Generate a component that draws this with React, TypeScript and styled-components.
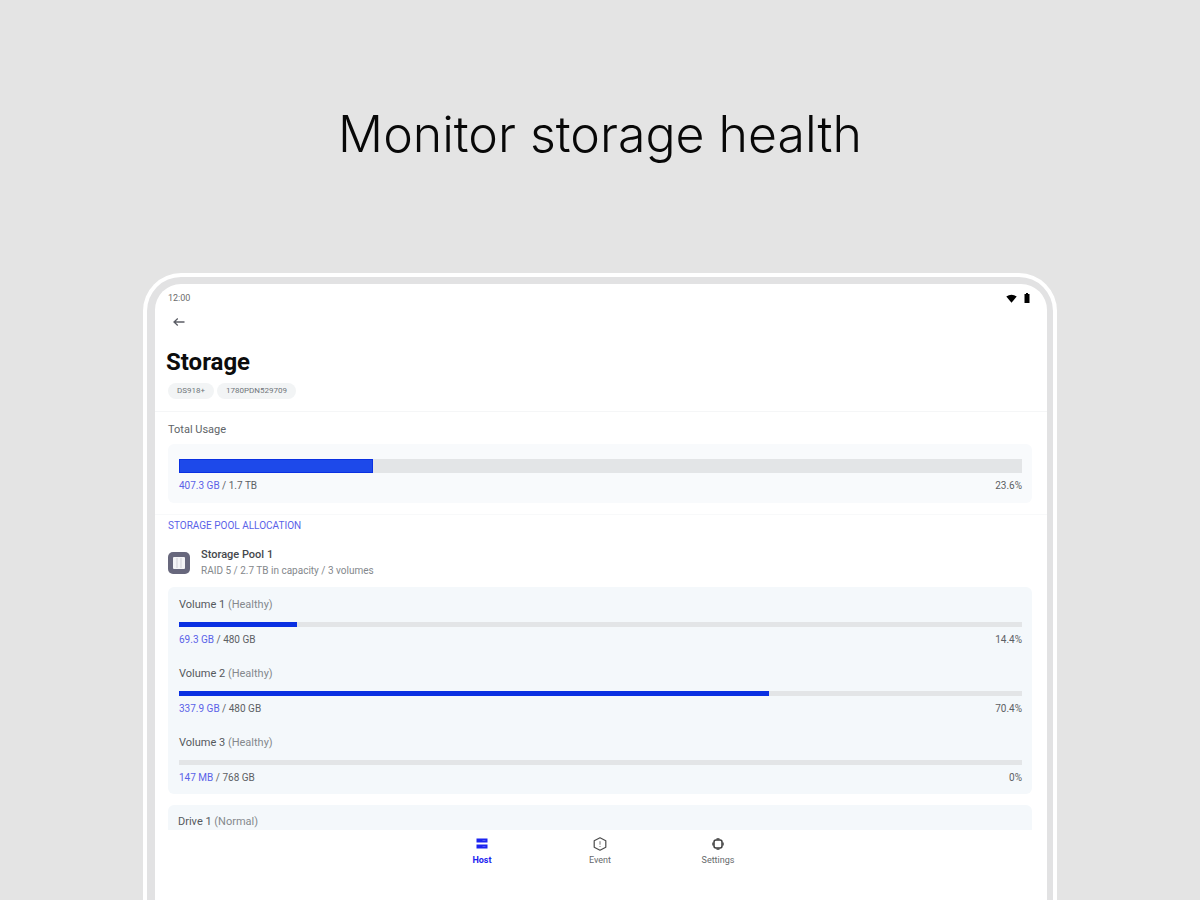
import React from "react";
import styled, { createGlobalStyle } from "styled-components";

const GlobalStyle = createGlobalStyle`
  * { box-sizing: border-box; }
  body { margin: 0; background: #e4e4e4; font-family: Roboto, "Liberation Sans", sans-serif; }
  h1, h2, h3, p { margin: 0; font-weight: 400; }
`;

const Stage = styled.main`
  min-height: 100vh;
  padding: 0 143px;
  display: flex;
  flex-direction: column;
`;

const Headline = styled.p`
  padding: 104px 0 109px;
  text-align: center;
  font-family: Inter, sans-serif;
  font-weight: 300;
  font-size: 50px;
  line-height: 60px;
  color: #080808;
`;

const Bezel = styled.div`
  flex: 1;
  display: flex;
  padding: 4px 4px 0;
  border-radius: 38px 38px 0 0;
  background: #fff;
`;

const Frame = styled.div`
  flex: 1;
  display: flex;
  padding: 7px 6px 0 8px;
  border-radius: 34px 34px 0 0;
  background: #e2e2e3;
`;

const Screen = styled.div`
  flex: 1;
  display: flex;
  flex-direction: column;
  border-radius: 26px 26px 0 0;
  background: #fff;
  overflow: hidden;
`;

const StatusBar = styled.div`
  display: flex;
  align-items: center;
  justify-content: space-between;
  padding: 8px 17px 0 13px;
  font-size: 9px;
  line-height: 12px;
  color: #6c6c6c;
`;

const StatusIcons = styled.div`
  display: flex;
  align-items: center;
  gap: 7px;
`;

const Header = styled.header`
  padding: 11px 11px 12px;
  border-bottom: 1px solid #f5f6f7;
`;

const BackButton = styled.button`
  display: flex;
  padding: 2px 6px;
  border: 0;
  background: none;
`;

const Title = styled.h1`
  padding: 19px 0 1px;
  font-size: 24px;
  line-height: 28px;
  font-weight: 700;
  color: #0c0c0c;
`;

const Tags = styled.div`
  display: flex;
  gap: 3px;
  padding: 6px 2px 0;
`;

const Tag = styled.span`
  padding: 0 9px;
  border-radius: 8px;
  background: #f2f4f5;
  font-size: 8px;
  line-height: 16px;
  color: #70757a;
`;

const Section = styled.section<{ $ruled?: boolean }>`
  padding: 11px 15px 0 13px;
  border-bottom: ${(p) => (p.$ruled ? "1px solid #f8f9fa" : "0")};
  padding-bottom: ${(p) => (p.$ruled ? "11px" : "0")};
`;

const SectionTitle = styled.h2`
  font-size: 11px;
  line-height: 14px;
  color: #606468;
`;

const Card = styled.div`
  margin-top: 7px;
  padding: 15px 10px 10px 11px;
  border-radius: 6px;
  background: #f8fafc;
`;

const PoolTitle = styled.h2`
  margin-top: -7px;
  font-size: 10px;
  line-height: 14px;
  color: #5a62e8;
`;

const PoolRow = styled.div`
  display: flex;
  align-items: center;
  gap: 11px;
  padding: 14px 0 8px;
`;

const PoolName = styled.h3`
  font-size: 11px;
  line-height: 16px;
  font-weight: 500;
  color: #45484c;
`;

const PoolInfo = styled.p`
  font-size: 10px;
  line-height: 16px;
  color: #84888c;
`;

const VolumeCard = styled.div`
  display: grid;
  gap: 20px;
  padding: 11px 10px 9px 11px;
  border-radius: 6px;
  background: #f4f8fb;
`;

const DriveCard = styled.div`
  margin-top: 11px;
  padding: 10px 10px 1px;
  border-radius: 6px 6px 0 0;
  background: #f4f8fb;
`;

const ItemName = styled.h3`
  font-size: 11px;
  line-height: 14px;
  color: #55595d;
`;

const Health = styled.span`
  color: #85898d;
`;

const Track = styled.div<{ $large?: boolean }>`
  height: ${(p) => (p.$large ? "14px" : "5px")};
  margin-top: ${(p) => (p.$large ? "0" : "10px")};
  background: #e3e5e7;
`;

const Fill = styled.div<{ $large?: boolean }>`
  height: 100%;
  background: ${(p) => (p.$large ? "#1d49ea" : "#0a30e2")};
  border: 1px solid #0a30e2;
`;

const Figures = styled.div`
  display: flex;
  justify-content: space-between;
  padding-top: 6px;
  font-size: 10px;
  line-height: 14px;
  color: #5c6064;
`;

const Used = styled.span`
  color: #5a62e8;
`;

const TabBar = styled.nav`
  display: flex;
  justify-content: center;
  padding: 7px 2px 32px 0;
`;

const Tab = styled.a<{ $active?: boolean }>`
  width: 118px;
  display: flex;
  flex-direction: column;
  align-items: center;
  gap: 3px;
  font-size: 9px;
  line-height: 12px;
  font-weight: ${(p) => (p.$active ? 700 : 400)};
  color: ${(p) => (p.$active ? "#1c24f0" : "#66696c")};
  text-decoration: none;
`;

type UsageProps = { used: string; total: string; label: string; share: number; large?: boolean };

function Usage({ used, total, label, share, large }: UsageProps) {
  return (
    <>
      <Track $large={large}>{share > 0 && <Fill $large={large} style={{ width: `${share}%` }} />}</Track>
      <Figures>
        <span>
          <Used>{used}</Used> / {total}
        </span>
        <span>{label}</span>
      </Figures>
    </>
  );
}

const volumes = [
  { name: "Volume 1", used: "69.3 GB", total: "480 GB", label: "14.4%", share: 14 },
  { name: "Volume 2", used: "337.9 GB", total: "480 GB", label: "70.4%", share: 70 },
  { name: "Volume 3", used: "147 MB", total: "768 GB", label: "0%", share: 0 },
];

const HostIcon = () => (
  <svg width="14" height="14" viewBox="0 0 14 14" aria-hidden="true">
    <path d="M1.500 1.500h11v4h-11zM1.500 7.500h11v4h-11z" fill="#1c24f0" />
    <path d="M7.500 3.500h3M7.500 9.500h3" stroke="#4d55f6" strokeWidth="1" />
  </svg>
);

const EventIcon = () => (
  <svg width="14" height="14" viewBox="0 0 14 14" fill="none" stroke="#4c4c4c" aria-hidden="true">
    <path d="M7 0.800l5.800 3v6.400L7 13.200l-5.800-3V3.800z" strokeWidth="1.200" strokeLinejoin="round" />
    <path d="M7 4.200v3.500M7 9v1" strokeWidth="1" stroke="#777" />
  </svg>
);

const SettingsIcon = () => (
  <svg width="14" height="14" viewBox="0 0 14 14" fill="none" stroke="#3c3c3c" aria-hidden="true">
    <rect x="3" y="3" width="8" height="8" rx="2" strokeWidth="1.500" />
    <path d="M5.500 1.900h3M5.500 12.100h3M1.900 5.500v3M12.100 5.500v3" strokeWidth="1.200" />
  </svg>
);

const PoolIcon = () => (
  <svg width="22" height="22" viewBox="0 0 22 22" aria-hidden="true">
    <rect width="22" height="22" rx="5" fill="#67677c" />
    <rect x="5" y="5" width="12" height="12" rx="1" fill="#f4f4f6" />
    <path d="M9 6v10M13 6v10" stroke="#cfcfd6" strokeWidth="1" />
  </svg>
);

export default function App() {
  return (
    <>
      <GlobalStyle />
      <Stage>
        <Headline>Monitor storage health</Headline>
        <Bezel>
          <Frame>
            <Screen>
              <StatusBar>
                <span>12:00</span>
                <StatusIcons>
                  <svg width="11" height="9" viewBox="0 0 11 9" aria-hidden="true">
                    <path d="M0.300 2.600Q5.500-1 10.700 2.600L5.500 8.800z" fill="#000" />
                  </svg>
                  <svg width="6" height="10" viewBox="0 0 6 10" aria-hidden="true">
                    <path d="M2 0h2v1h1.500v9h-5V1H2z" fill="#000" />
                  </svg>
                </StatusIcons>
              </StatusBar>
              <Header>
                <BackButton aria-label="Back">
                  <svg width="14" height="10" viewBox="0 0 14 10" fill="none" stroke="#5c5e66" strokeWidth="1.300" aria-hidden="true">
                    <path d="M12.500 5H2M5.800 1.500L2 5l3.800 3.500" />
                  </svg>
                </BackButton>
                <Title>Storage</Title>
                <Tags>
                  <Tag>DS918+</Tag>
                  <Tag>1780PDN529709</Tag>
                </Tags>
              </Header>
              <Section $ruled>
                <SectionTitle>Total Usage</SectionTitle>
                <Card>
                  <Usage large used="407.3 GB" total="1.7 TB" label="23.6%" share={23} />
                </Card>
              </Section>
              <Section>
                <PoolTitle>STORAGE POOL ALLOCATION</PoolTitle>
                <PoolRow>
                  <PoolIcon />
                  <div>
                    <PoolName>Storage Pool 1</PoolName>
                    <PoolInfo>RAID 5 / 2.7 TB in capacity / 3 volumes</PoolInfo>
                  </div>
                </PoolRow>
                <VolumeCard>
                  {volumes.map((v) => (
                    <div key={v.name}>
                      <ItemName>
                        {v.name} <Health>(Healthy)</Health>
                      </ItemName>
                      <Usage used={v.used} total={v.total} label={v.label} share={v.share} />
                    </div>
                  ))}
                </VolumeCard>
                <DriveCard>
                  <ItemName>
                    Drive 1 <Health>(Normal)</Health>
                  </ItemName>
                </DriveCard>
              </Section>
              <TabBar>
                <Tab href="#host" $active>
                  <HostIcon />
                  Host
                </Tab>
                <Tab href="#event">
                  <EventIcon />
                  Event
                </Tab>
                <Tab href="#settings">
                  <SettingsIcon />
                  Settings
                </Tab>
              </TabBar>
            </Screen>
          </Frame>
        </Bezel>
      </Stage>
    </>
  );
}
